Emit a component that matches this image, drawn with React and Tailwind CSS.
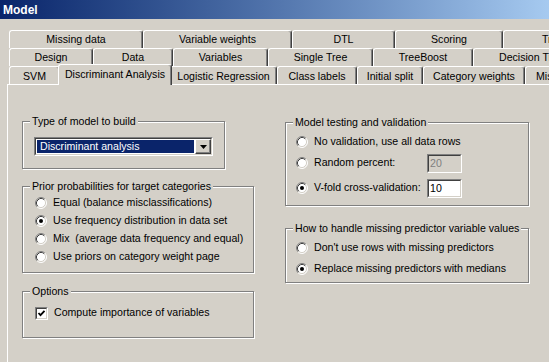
const row1 = [
  { label: 'Missing data', w: 'w-[134px]' },
  { label: 'Variable weights', w: 'w-[149px]' },
  { label: 'DTL', w: 'w-[103px]' },
  { label: 'Scoring', w: 'w-[108px]' },
  { label: 'Transform', w: 'w-[100px]', pad: 'justify-start pl-[38px]' },
]

const row2 = [
  { label: 'Design', w: 'w-[84px]' },
  { label: 'Data', w: 'w-[80px]' },
  { label: 'Variables', w: 'w-[95px]' },
  { label: 'Single Tree', w: 'w-[105px]' },
  { label: 'TreeBoost', w: 'w-[100px]' },
  { label: 'Decision Tree Forest', w: 'w-[140px]', pad: 'justify-start pl-[25px]' },
]

const row3 = [
  { label: 'SVM', w: 'w-[51px]', front: true },
  { label: 'Discriminant Analysis', w: 'w-[114px]', selected: true },
  { label: 'Logistic Regression', w: 'w-[107px]', front: true },
  { label: 'Class labels', w: 'w-[80px]', front: true },
  { label: 'Initial split', w: 'w-[66px]', front: true },
  { label: 'Category weights', w: 'w-[102px]', front: true },
  { label: 'Missing values', w: 'w-[100px]', pad: 'justify-start pl-[10px]', front: true },
]

const Tab = ({ label, w, pad, selected, front }) => (
  <div
    className={`${w} shrink-0 flex items-center whitespace-nowrap overflow-hidden rounded-t-[3px] border-l border-t border-r border-white border-r-[#404040] shadow-[inset_-1px_0_0_#808080] bg-[#d4d0c8] ${pad || 'justify-center'} ${
      selected ? 'relative z-10 h-[21px] -mx-[2px] -mb-[1px] pb-[1px]' : front ? 'h-[18px] pt-[3px]' : 'h-[18px] pt-[1px]'
    }`}>
    {label}
  </div>
)

const RadioIcon = ({ checked }) => (
  <svg width="12" height="12" viewBox="0 0 12 12" className="shrink-0">
    <circle cx="6" cy="6" r="5" fill="#fff" />
    <path d="M2.11 9.89 A5.5 5.5 0 0 1 9.89 2.11" fill="none" stroke="#808080" />
    <path d="M9.89 2.11 A5.5 5.5 0 0 1 2.11 9.89" fill="none" stroke="#fff" />
    <path d="M2.82 9.18 A4.5 4.5 0 0 1 9.18 2.82" fill="none" stroke="#404040" />
    <path d="M9.18 2.82 A4.5 4.5 0 0 1 2.82 9.18" fill="none" stroke="#d4d0c8" />
    {checked && <circle cx="6" cy="6" r="2" fill="#000" />}
  </svg>
)

const Radio = ({ checked, label, className = 'h-[18px]' }) => (
  <div className={`flex items-center gap-[6px] whitespace-pre ${className}`}>
    <RadioIcon checked={checked} />
    <span>{label}</span>
  </div>
)

const Sunken = ({ className, children }) => (
  <div className={`border-t border-l border-[#808080] border-b border-r border-b-white border-r-white ${className}`}>
    <div className="flex h-full w-full border-t border-l border-[#404040] border-b border-r border-b-[#d4d0c8] border-r-[#d4d0c8]">
      {children}
    </div>
  </div>
)

const GroupBox = ({ title, className, children }) => (
  <div className={`relative border border-[#808080] shadow-[inset_1px_1px_0_#fff,1px_1px_0_#fff] ${className}`}>
    <span className="absolute left-[7px] -top-[8px] bg-[#d4d0c8] px-[2px] leading-[14px] whitespace-nowrap">{title}</span>
    {children}
  </div>
)

const TextBox = ({ value, disabled }) => (
  <Sunken className="h-[19px] w-[35px] shrink-0">
    <div className={`flex-1 pl-[1px] leading-[14px] ${disabled ? 'bg-[#d4d0c8] text-[#808080]' : 'bg-white text-black'}`}>
      {value}
    </div>
  </Sunken>
)

export default function App() {
  return (
    <div className="w-[549px] h-[362px] overflow-hidden bg-[#d4d0c8] text-black text-[10.6px] font-['Liberation_Sans',Arial,sans-serif]">
      {/* Title bar */}
      <div className="h-[19px] flex items-center pl-[3px] bg-gradient-to-r from-[#0a246a] to-[#a6caf0] text-white font-bold text-[12px]">
        Model
      </div>

      {/* Tabs */}
      <div className="mt-[11px] pl-[9px]">
        <div className="flex h-[18px]">{row1.map(t => <Tab key={t.label} {...t} />)}</div>
        <div className="flex h-[18px]">{row2.map(t => <Tab key={t.label} {...t} />)}</div>
        <div className="flex h-[18px] items-end">{row3.map(t => <Tab key={t.label} {...t} />)}</div>
      </div>

      {/* Page */}
      <div className="ml-[7px] h-[300px] border-l border-t border-white flex items-start gap-[31px] pl-[14px]">
        <div className="w-[232px] mt-[36px] flex flex-col">
          <GroupBox title="Type of model to build" className="w-[203px] h-[48px] pl-[11px] pt-[15px]">
            <Sunken className="h-[19px] w-[179px]">
              <div className="flex flex-1 bg-white p-[1px]">
                <div className="flex-1 bg-[#0a246a] text-white pl-[3px] leading-[13px]">Discriminant analysis</div>
              </div>
              <div className="w-[16px] flex items-center justify-center border-t border-l border-white border-b border-r border-b-[#404040] border-r-[#404040] bg-[#d4d0c8] shadow-[inset_-1px_-1px_0_#808080]">
                <svg width="7" height="4" viewBox="0 0 7 4">
                  <path d="M0 0 H7 L3.5 4 Z" fill="#000" />
                </svg>
              </div>
            </Sunken>
          </GroupBox>

          <GroupBox title="Prior probabilities for target categories" className="mt-[17px] h-[87px] pl-[12px] pt-[7px]">
            <Radio label="Equal (balance misclassifications)" />
            <Radio checked label="Use frequency distribution in data set" />
            <Radio label="Mix  (average data frequency and equal)" />
            <Radio label="Use priors on category weight page" />
          </GroupBox>

          <GroupBox title="Options" className="mt-[18px] h-[47px] pl-[12px] pt-[12px]">
            <div className="flex h-[18px] items-center gap-[6px]">
              <Sunken className="h-[13px] w-[13px]">
                <div className="flex flex-1 items-center justify-center bg-white">
                  <svg width="9" height="9" viewBox="0 0 9 9">
                    <path d="M1.5 4 L3.5 6.2 L7.5 1.8" fill="none" stroke="#000" strokeWidth="1.8" />
                  </svg>
                </div>
              </Sunken>
              <span>Compute importance of variables</span>
            </div>
          </GroupBox>
        </div>

        <div className="w-[244px] mt-[37px] flex flex-col">
          <GroupBox title="Model testing and validation" className="h-[84px] pl-[10px] pt-[10px]">
            <Radio label="No validation, use all data rows" />
            <div className="flex h-[22px] mt-[1px] items-center">
              <Radio label="Random percent:" className="w-[131px] shrink-0" />
              <TextBox value="20" disabled />
            </div>
            <div className="flex h-[22px] mt-[3px] items-center">
              <Radio checked label="V-fold cross-validation:" className="w-[131px] shrink-0" />
              <TextBox value="10" />
            </div>
          </GroupBox>

          <GroupBox title="How to handle missing predictor variable values" className="mt-[22px] h-[55px] pl-[10px] pt-[8px]">
            <Radio label="Don't use rows with missing predictors" className="h-[21px]" />
            <Radio checked label="Replace missing predictors with medians" className="h-[21px]" />
          </GroupBox>
        </div>
      </div>
    </div>
  )
}
